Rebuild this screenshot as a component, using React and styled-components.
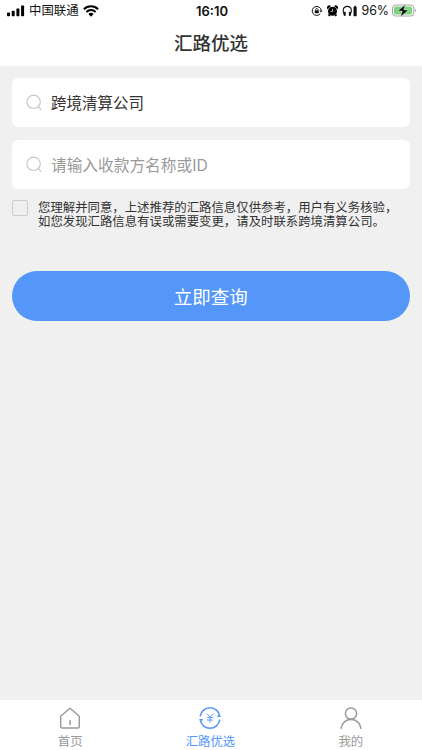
import styled, { createGlobalStyle } from 'styled-components'

const colors = {
    primary: '#5497f8',
    background: '#f0f0f0',
    text: '#333333',
    muted: '#999999',
    icon: '#c8c8c8',
    battery: '#7dd47f',
}

const GlobalStyle = createGlobalStyle`
    * {
        box-sizing: border-box;
    }

    body {
        margin: 0;
        background-color: ${colors.background};
        font-family: Inter, "Noto Sans CJK SC", sans-serif;
    }
`

const Page = styled.div`
    display: flex;
    flex-direction: column;
    width: 100%;
    height: 100vh;
    overflow: hidden;
    color: ${colors.text};
`

const StatusBar = styled.div`
    display: grid;
    grid-template-columns: 1fr auto 1fr;
    align-items: center;
    height: 21px;
    padding: 0 5px 0 7px;
    background-color: #ffffff;
    color: #111111;
    line-height: 20px;
`

const StatusGroup = styled.div`
    display: flex;
    align-items: center;
    justify-content: ${(props) => props.$align};
`

const Carrier = styled.span`
    margin: 0 4px 0 4px;
    padding-top: 1px;
    font-size: 12.4px;
`

const Clock = styled.span`
    padding-top: 1px;
    font-size: 13px;
    font-weight: 600;
`

const StatusIcons = styled.div`
    display: flex;
    align-items: center;
    gap: 4px;
`

const Percent = styled.span`
    margin: 0 3px 0 3px;
    padding-top: 1px;
    font-size: 12.4px;
`

const Header = styled.header`
    display: flex;
    align-items: center;
    justify-content: center;
    height: 44.5px;
    padding-bottom: 2px;
    background-color: #ffffff;
    font-size: 18.5px;
    font-weight: 500;
`

const Content = styled.main`
    display: flex;
    flex: 1;
    flex-direction: column;
    padding: 12px 12.5px 0 12px;
`

const Field = styled.label`
    display: flex;
    align-items: center;
    height: 49.5px;
    margin-bottom: 12.5px;
    padding: 0 14px;
    border-radius: 6px;
    background-color: #ffffff;
`

const FieldInput = styled.input`
    flex: 1;
    min-width: 0;
    height: 30px;
    margin-left: 9px;
    padding: 0;
    border: none;
    outline: none;
    background: transparent;
    color: ${colors.text};
    font-family: inherit;
    font-size: 15.5px;

    &:placeholder-shown {
        padding-top: 2px;
    }

    &::placeholder {
        color: ${colors.muted};
        font-size: 15.7px;
        opacity: 1;
    }
`

const Agreement = styled.label`
    display: flex;
    align-items: flex-start;
    margin-top: -2px;
`

const Checkbox = styled.input`
    appearance: none;
    flex: none;
    width: 16px;
    height: 16px;
    margin: 0 10px 0 0;
    border: 1px solid #cccccc;
    border-radius: 2px;
`

const AgreementText = styled.p`
    margin: 0;
    padding-top: 1px;
    font-size: 12.4px;
    line-height: 14.6px;
    white-space: nowrap;
`

const SubmitButton = styled.button`
    height: 50px;
    margin-top: 41.5px;
    padding: 0;
    border: none;
    border-radius: 25px;
    background-color: ${colors.primary};
    color: #ffffff;
    font-family: inherit;
    font-size: 18.5px;
`

const TabBar = styled.nav`
    display: grid;
    grid-template-columns: repeat(3, 1fr);
    height: 50px;
    padding-right: 1px;
    background-color: #ffffff;
`

const Tab = styled.div`
    display: flex;
    flex-direction: column;
    align-items: center;
    padding-top: 7px;
    color: ${(props) => (props.$active ? colors.primary : colors.muted)};
    font-size: 12.4px;
    line-height: 18px;

    svg {
        margin-bottom: 4px;
    }
`

function SignalIcon() {
    return (
        <svg width="18" height="12" viewBox="0 0 18 12" fill="#000">
            <rect x="0" y="7.5" width="3" height="3.8" rx="0.7" />
            <rect x="4.7" y="5.8" width="3" height="5.5" rx="0.7" />
            <rect x="9.4" y="3.4" width="3" height="7.9" rx="0.7" />
            <rect x="14.1" y="0.6" width="3" height="10.7" rx="0.7" />
        </svg>
    )
}

function WifiIcon() {
    return (
        <svg width="16" height="12" viewBox="0 0 16 12" fill="none" stroke="#000" strokeWidth="2">
            <path d="M0.9 4.3a10 10 0 0 1 14.2 0" />
            <path d="M3.4 7a6.5 6.5 0 0 1 9.2 0" />
            <path d="M5.4 9.1a3.7 3.7 0 0 1 5.2 0L8 11.7z" fill="#000" stroke="none" />
        </svg>
    )
}

function RotationLockIcon() {
    return (
        <svg width="12" height="12" viewBox="0 0 12 12" fill="none" stroke="#111" strokeWidth="1">
            <path d="M9.2 8.8A4.5 4.5 0 1 1 10.2 5.4" />
            <path d="M8.4 5.4h3.2L10 7.6z" fill="#111" stroke="none" />
            <rect x="3.8" y="5.3" width="4" height="3" rx="0.4" fill="#111" stroke="none" />
            <path d="M4.6 5.4V4.7a1.2 1.2 0 0 1 2.4 0v.7" strokeWidth="0.8" />
        </svg>
    )
}

function AlarmIcon() {
    return (
        <svg width="11" height="12" viewBox="0 0 11 12" fill="#000">
            <circle cx="5.5" cy="6.2" r="4.5" />
            <path d="M0.6 4.2A2 2 0 0 1 3.9 1.1zM10.4 4.2A2 2 0 0 0 7.1 1.1zM1.6 8.8l1.9 1.6-1.2 1-1.2-1.1zM9.4 8.8l-1.9 1.6 1.2 1 1.2-1.1z" />
            <path d="M5.6 3.9v2.5H3.6" fill="none" stroke="#fff" strokeWidth="0.7" />
        </svg>
    )
}

function HeadphonesIcon() {
    return (
        <svg width="16" height="12" viewBox="0 0 16 12" fill="#111">
            <path d="M2.5 9.7C.4 7 .4 1.4 5.3 1.4s4.9 5.6 2.8 8.3" fill="none" stroke="#111" strokeWidth="1.1" />
            <rect x="1.6" y="6.7" width="2.1" height="4.2" rx="0.8" />
            <rect x="6.9" y="6.7" width="2.1" height="4.2" rx="0.8" />
            <rect x="11.5" y="1.7" width="3.2" height="9.6" rx="0.7" />
            <rect x="12.3" y="0.8" width="1.6" height="1.5" />
        </svg>
    )
}

function BatteryIcon() {
    return (
        <svg width="25" height="13" viewBox="0 0 25 13">
            <rect x="0.5" y="1" width="21.4" height="11" rx="3" fill="#fff" stroke="#a5a5a5" />
            <rect x="2" y="2.4" width="18" height="8.2" rx="1.6" fill={colors.battery} />
            <path d="M23 4.8v3.4c1.2-.4 1.2-3 0-3.4z" fill="#999" />
            <path d="M13.4.4L6 7h4.4l-1.9 5.8L16.2 6h-4.6z" fill="#000" stroke="#fff" strokeWidth="0.4" />
        </svg>
    )
}

function SearchIcon() {
    return (
        <svg width="16" height="17" viewBox="0 0 16 17" fill="none" stroke={colors.icon} strokeWidth="1.2">
            <circle cx="7.6" cy="7.8" r="6.7" />
            <path d="M12.3 12.7l2.6 2.8" strokeLinecap="round" />
        </svg>
    )
}

function HomeIcon() {
    return (
        <svg width="22" height="22" viewBox="0 0 22 22" fill="none" stroke="currentColor" strokeWidth="1.4" strokeLinejoin="round">
            <path d="M1.7 9.2L11 1.3l9.3 7.9v10.4a1.4 1.4 0 0 1-1.4 1.4H3.1a1.4 1.4 0 0 1-1.4-1.4z" />
            <path d="M11 13.7v3.8" strokeWidth="1.6" strokeLinecap="round" />
        </svg>
    )
}

function ExchangeIcon() {
    return (
        <svg width="22" height="22" viewBox="0 0 22 22" fill="none" stroke="currentColor" strokeWidth="1.6">
            <path d="M1.2 9.3A9.9 9.9 0 0 1 20.8 9.3h-2.6" />
            <path d="M20.8 12.7A9.9 9.9 0 0 1 1.2 12.7h2.6" />
            <path d="M8 6.6l3 3.6 3-3.6M11 10.2v5.4M7.8 10.6h6.4M7.8 13h6.4" strokeWidth="0.9" />
        </svg>
    )
}

function UserIcon() {
    return (
        <svg width="22" height="22" viewBox="0 0 22 22" fill="none" stroke="currentColor" strokeWidth="1.5">
            <circle cx="11" cy="6.5" r="5.6" />
            <path d="M1.2 21.2c.6-5.4 4.8-8.6 9.8-8.6s9.2 3.2 9.8 8.6" strokeLinecap="round" />
        </svg>
    )
}

function App() {
    return (
        <Page>
            <GlobalStyle />
            <StatusBar>
                <StatusGroup $align="flex-start">
                    <SignalIcon />
                    <Carrier>中国联通</Carrier>
                    <WifiIcon />
                </StatusGroup>
                <Clock>16:10</Clock>
                <StatusGroup $align="flex-end">
                    <StatusIcons>
                        <RotationLockIcon />
                        <AlarmIcon />
                        <HeadphonesIcon />
                    </StatusIcons>
                    <Percent>96%</Percent>
                    <BatteryIcon />
                </StatusGroup>
            </StatusBar>
            <Header>汇路优选</Header>
            <Content>
                <Field>
                    <SearchIcon />
                    <FieldInput defaultValue="跨境清算公司" />
                </Field>
                <Field>
                    <SearchIcon />
                    <FieldInput placeholder="请输入收款方名称或ID" />
                </Field>
                <Agreement>
                    <Checkbox type="checkbox" />
                    <AgreementText>
                        您理解并同意，上述推荐的汇路信息仅供参考，用户有义务核验，
                        <br />
                        如您发现汇路信息有误或需要变更，请及时联系跨境清算公司。
                    </AgreementText>
                </Agreement>
                <SubmitButton>立即查询</SubmitButton>
            </Content>
            <TabBar>
                <Tab>
                    <HomeIcon />
                    首页
                </Tab>
                <Tab $active>
                    <ExchangeIcon />
                    汇路优选
                </Tab>
                <Tab>
                    <UserIcon />
                    我的
                </Tab>
            </TabBar>
        </Page>
    )
}

export default App
